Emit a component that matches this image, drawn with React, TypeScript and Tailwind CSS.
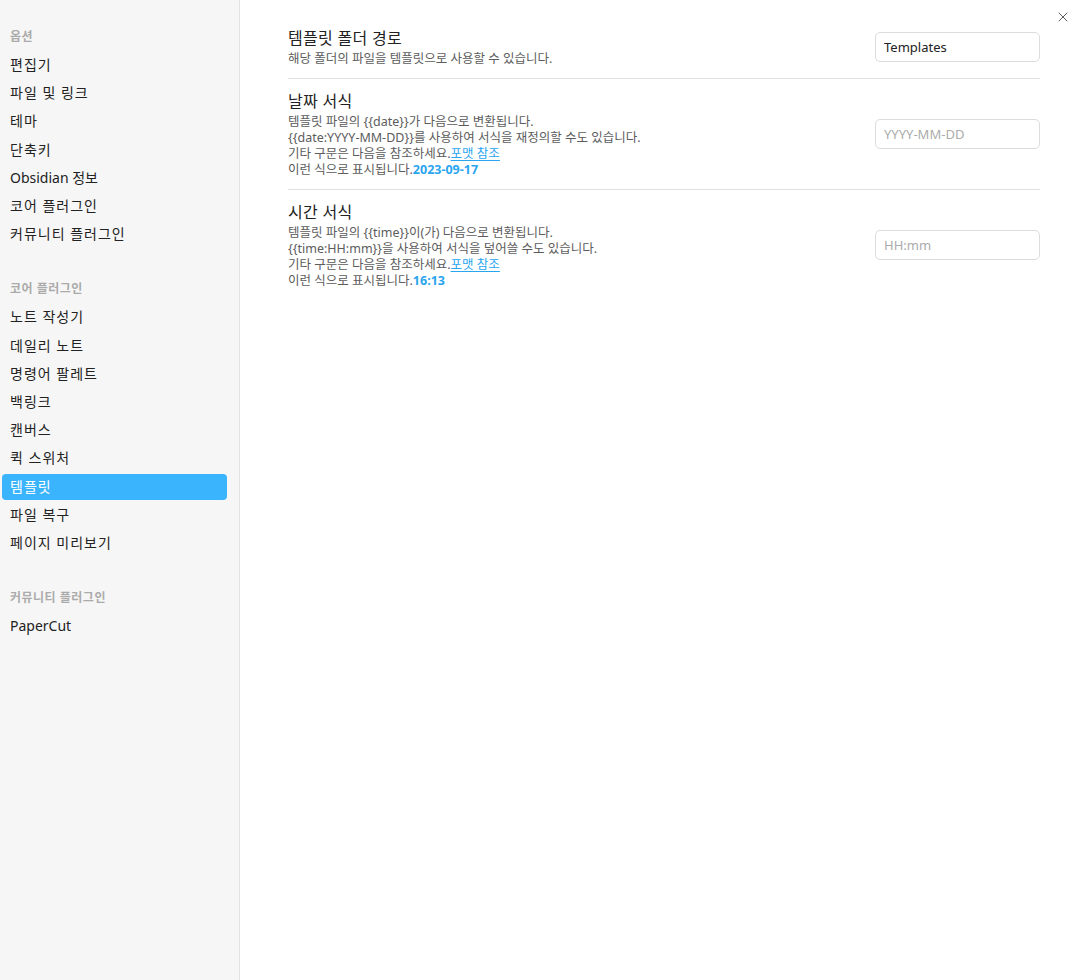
import { X } from "lucide-react";

const GROUPS = [
  {
    title: "옵션",
    items: ["편집기", "파일 및 링크", "테마", "단축키", "Obsidian 정보", "코어 플러그인", "커뮤니티 플러그인"],
  },
  {
    title: "코어 플러그인",
    items: ["노트 작성기", "데일리 노트", "명령어 팔레트", "백링크", "캔버스", "퀵 스위처", "템플릿", "파일 복구", "페이지 미리보기"],
  },
  {
    title: "커뮤니티 플러그인",
    items: ["PaperCut"],
  },
];

const FONT = "font-['Noto_Sans','Noto_Sans_CJK_KR',sans-serif]";

function Sidebar() {
  return (
    <aside className="w-[240px] shrink-0 border-r border-[#e3e3e3] bg-[#f6f6f6] pl-[2px] pr-[12px] pt-[26px]">
      {GROUPS.map((g) => (
        <div key={g.title} className="mb-[30px]">
          <div className="h-[25px] pl-[8px] text-[12px] font-bold leading-[22px] tracking-[0.5px] text-[#ababab]">
            {g.title}
          </div>
          {g.items.map((item) => {
            const active = item === "템플릿" && g.title === "코어 플러그인";
            const korean = !/[A-Za-z]/.test(item);
            return (
              <div key={item} className="flex h-[28.2px] items-center">
                <div
                  className={`h-[26px] w-full rounded-[4px] pl-[8px] text-[14px] leading-[26px] ${
                    korean ? "tracking-[1px]" : ""
                  } ${active ? "bg-[#3bb4fe] text-white" : "text-[#222222]"}`}
                >
                  {item}
                </div>
              </div>
            );
          })}
        </div>
      ))}
    </aside>
  );
}

function Link() {
  return <span className="text-[#2aa5ef] underline underline-offset-2">포맷 참조</span>;
}

function Setting({
  title,
  lines,
  input,
  placeholder,
  last,
}: {
  title: string;
  lines: React.ReactNode[];
  input?: string;
  placeholder?: string;
  last?: boolean;
}) {
  return (
    <div
      className={`flex items-center justify-between pb-[11px] pt-[10px] ${last ? "" : "border-b border-[#e0e0e0]"}`}
    >
      <div>
        <div className="text-[16px] leading-[24px] tracking-[0.3px] text-[#222222]">{title}</div>
        <div className="mt-[1px] text-[12.5px] leading-[16px] text-[#5c5c5c]">
          {lines.map((l, i) => (
            <div key={i}>{l}</div>
          ))}
        </div>
      </div>
      <input
        readOnly
        value={input ?? ""}
        placeholder={placeholder}
        className="h-[30px] w-[165px] rounded-[5px] border border-[#dcdcdc] bg-white px-[8px] text-[13px] text-[#222222] outline-none placeholder:text-[#ababab]"
      />
    </div>
  );
}

export default function App() {
  return (
    <div className={`flex h-[980px] w-full overflow-hidden bg-white ${FONT}`}>
      <Sidebar />
      <main className="relative flex-1 pl-[48px] pr-[37px] pt-[16px]">
        <button className="absolute right-[6px] top-[9px] text-[#5c5c5c]">
          <X size={16} strokeWidth={1.5} />
        </button>
        <Setting
          title="템플릿 폴더 경로"
          lines={["해당 폴더의 파일을 템플릿으로 사용할 수 있습니다."]}
          input="Templates"
        />
        <Setting
          title="날짜 서식"
          lines={[
            "템플릿 파일의 {{date}}가 다음으로 변환됩니다.",
            "{{date:YYYY-MM-DD}}를 사용하여 서식을 재정의할 수도 있습니다.",
            <>
              기타 구문은 다음을 참조하세요.
              <Link />
            </>,
            <>
              이런 식으로 표시됩니다.<span className="font-bold text-[#2aa5ef]">2023-09-17</span>
            </>,
          ]}
          placeholder="YYYY-MM-DD"
        />
        <Setting
          title="시간 서식"
          lines={[
            "템플릿 파일의 {{time}}이(가) 다음으로 변환됩니다.",
            "{{time:HH:mm}}을 사용하여 서식을 덮어쓸 수도 있습니다.",
            <>
              기타 구문은 다음을 참조하세요.
              <Link />
            </>,
            <>
              이런 식으로 표시됩니다.<span className="font-bold text-[#2aa5ef]">16:13</span>
            </>,
          ]}
          placeholder="HH:mm"
          last
        />
      </main>
    </div>
  );
}
